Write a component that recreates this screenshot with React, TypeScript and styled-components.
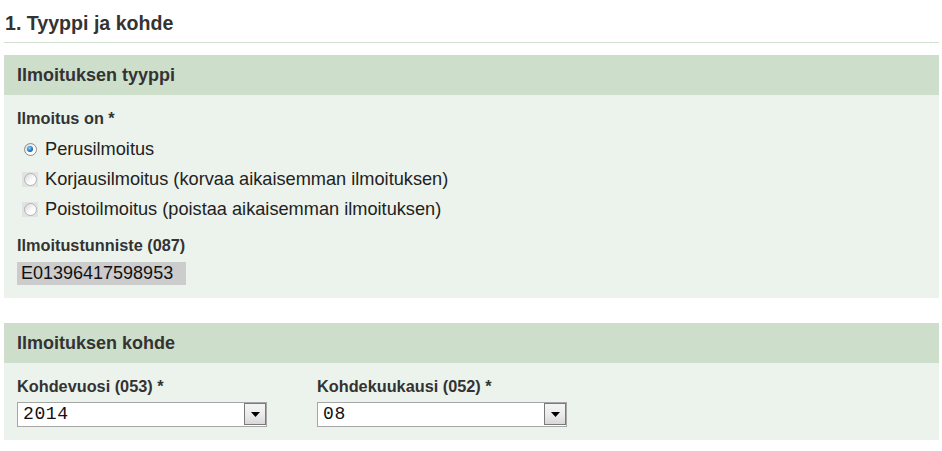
import React from "react";
import styled, { createGlobalStyle } from "styled-components";

const Global = createGlobalStyle`
  html, body { margin: 0; padding: 0; background: #fff; }
  body { font-family: "Liberation Sans", Arial, sans-serif; color: #333; }
`;

const Page = styled.div`
  padding: 0 3px 0 4px;
`;

const Title = styled.h1`
  margin: 0;
  padding: 12px 0 8px 1px;
  font-size: 19.6px;
  line-height: 22px;
  font-weight: bold;
  color: #333;
  border-bottom: 1px solid #cfe0cc;
`;

const Section = styled.section<{ $top: number }>`
  margin-top: ${(p) => p.$top}px;
  background: #ecf3ec;
`;

const SectionHeader = styled.h2`
  margin: 0;
  height: 40px;
  padding: 0 13px;
  background: #cddfcb;
  font-size: 18px;
  line-height: 40px;
  font-weight: bold;
  color: #333;
`;

const SectionBody = styled.div`
  padding: 13px;
`;

const Label = styled.div<{ $top?: number }>`
  margin-top: ${(p) => p.$top ?? 0}px;
  font-size: 16.3px;
  line-height: 20px;
  font-weight: bold;
  color: #333;
`;

const RadioList = styled.div`
  margin-top: 6px;
  display: flex;
  flex-direction: column;
`;

const RadioRow = styled.label`
  display: flex;
  align-items: center;
  height: 30px;
  font-size: 18.2px;
  color: #222;
`;

const RadioBox = styled.span<{ $disabled?: boolean }>`
  width: 16px;
  height: 15px;
  margin-left: 5px;
  margin-right: 7px;
  display: flex;
  align-items: center;
  justify-content: center;
  background: ${(p) => (p.$disabled ? "#e2e2e2" : "transparent")};
`;

const RadioCircle = styled.span<{ $disabled?: boolean }>`
  width: 11px;
  height: 11px;
  border-radius: 50%;
  border: 1px solid ${(p) => (p.$disabled ? "#b4b4b4" : "#8c8c8c")};
  background: ${(p) =>
    p.$disabled
      ? "linear-gradient(135deg, #d8d8d8, #fdfdfd 60%)"
      : "linear-gradient(135deg, #d4d4d4, #ffffff 60%)"};
  display: flex;
  align-items: center;
  justify-content: center;
  box-sizing: content-box;
`;

const RadioDot = styled.span`
  width: 6px;
  height: 6px;
  border-radius: 50%;
  background: radial-gradient(circle at 40% 35%, #8fd0f7, #1f78c0 55%, #0b3f73);
`;

const ReadOnlyValue = styled.div`
  margin-top: 7px;
  width: 165px;
  height: 23px;
  padding-left: 4px;
  background: #cccccc;
  font-size: 18px;
  line-height: 23px;
  color: #111;
`;

const FieldRow = styled.div`
  display: flex;
`;

const Field = styled.div`
  width: 300px;
`;

const SelectBox = styled.div`
  margin-top: 6px;
  width: 250px;
  height: 25px;
  box-sizing: border-box;
  border: 1px solid #a6a6a6;
  background: #fff;
  display: flex;
  align-items: stretch;
`;

const SelectText = styled.span`
  flex: 1;
  padding-left: 5px;
  font-family: "Liberation Mono", "Courier New", monospace;
  font-size: 18px;
  letter-spacing: 0.6px;
  line-height: 23px;
  color: #111;
`;

const SelectButton = styled.span`
  width: 22px;
  box-sizing: border-box;
  border: 1px solid #7a7a7a;
  margin: 0 0 1px 0;
  background: linear-gradient(#f4f4f4 0%, #ececec 50%, #d8d8d8 100%);
  display: flex;
  align-items: center;
  justify-content: center;
`;

const Radio = ({ checked, disabled, text }: { checked?: boolean; disabled?: boolean; text: string }) => (
  <RadioRow>
    <RadioBox $disabled={disabled}>
      <RadioCircle $disabled={disabled}>{checked && <RadioDot />}</RadioCircle>
    </RadioBox>
    {text}
  </RadioRow>
);

const Select = ({ value }: { value: string }) => (
  <SelectBox>
    <SelectText>{value}</SelectText>
    <SelectButton>
      <svg width="9" height="5" viewBox="0 0 9 5">
        <polygon points="0,0 9,0 4.5,5" fill="#000" />
      </svg>
    </SelectButton>
  </SelectBox>
);

export default function App() {
  return (
    <Page>
      <Global />
      <Title>1. Tyyppi ja kohde</Title>
      <Section $top={12}>
        <SectionHeader>Ilmoituksen tyyppi</SectionHeader>
        <SectionBody>
          <Label>Ilmoitus on *</Label>
          <RadioList>
            <Radio checked text="Perusilmoitus" />
            <Radio disabled text="Korjausilmoitus (korvaa aikaisemman ilmoituksen)" />
            <Radio disabled text="Poistoilmoitus (poistaa aikaisemman ilmoituksen)" />
          </RadioList>
          <Label $top={11}>Ilmoitustunniste (087)</Label>
          <ReadOnlyValue>E01396417598953</ReadOnlyValue>
        </SectionBody>
      </Section>
      <Section $top={25}>
        <SectionHeader>Ilmoituksen kohde</SectionHeader>
        <SectionBody>
          <FieldRow>
            <Field>
              <Label>Kohdevuosi (053) *</Label>
              <Select value="2014" />
            </Field>
            <Field>
              <Label>Kohdekuukausi (052) *</Label>
              <Select value="08" />
            </Field>
          </FieldRow>
        </SectionBody>
      </Section>
    </Page>
  );
}
